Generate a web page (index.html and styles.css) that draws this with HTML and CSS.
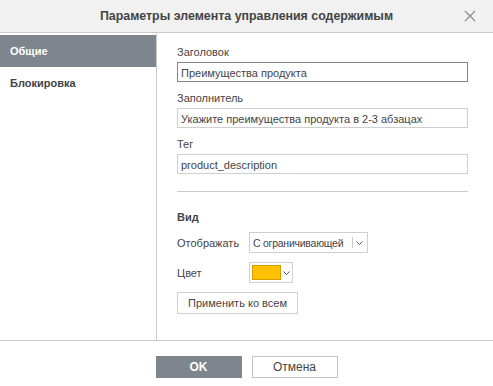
FILE: index.html
```html
<!DOCTYPE html>
<html>
<head>
<meta charset="utf-8">
<link rel="stylesheet" href="styles.css">
</head>
<body>
<div class="dialog">
  <div class="header">
    <span class="title">Параметры элемента управления содержимым</span>
    <span class="close"><svg width="12" height="12" viewBox="0 0 12 12"><path d="M1 1L11 11M11 1L1 11" stroke="#8a8a8a" stroke-width="1.1" fill="none"/></svg></span>
  </div>
  <div class="body">
    <div class="sidebar">
      <div class="tab active">Общие</div>
      <div class="tab">Блокировка</div>
    </div>
    <div class="content">
      <div class="label">Заголовок</div>
      <div class="input focused">Преимущества продукта</div>
      <div class="label">Заполнитель</div>
      <div class="input">Укажите преимущества продукта в 2-3 абзацах</div>
      <div class="label">Тег</div>
      <div class="input">product_description</div>
      <div class="sep"></div>
      <div class="section">Вид</div>
      <div class="row">
        <span class="rlabel">Отображать</span>
        <div class="select"><span class="sel-text">С ограничивающей</span><span class="sel-bar"></span><span class="caret"><svg width="7" height="4" viewBox="0 0 7 4"><path d="M0.5 0.5L3.5 3.5L6.5 0.5" stroke="#555" fill="none"/></svg></span></div>
      </div>
      <div class="row color-row">
        <span class="rlabel">Цвет</span>
        <div class="colorsel"><span class="swatch"></span><span class="caret"><svg width="7" height="4" viewBox="0 0 7 4"><path d="M0.5 0.5L3.5 3.5L6.5 0.5" stroke="#555" fill="none"/></svg></span></div>
      </div>
      <div class="btn apply">Применить ко всем</div>
    </div>
  </div>
  <div class="footer">
    <div class="btn ok">OK</div>
    <div class="btn cancel">Отмена</div>
  </div>
</div>
</body>
</html>
```
FILE: styles.css
```css
html, body { margin: 0; padding: 0; background: #fff; }
body { font-family: "Liberation Sans", Arial, sans-serif; font-size: 11px; color: #444; }
.dialog { width: 493px; height: 386px; display: flex; flex-direction: column; }
.header { height: 32px; border-bottom: 1px solid #cbcbcb; background: #f1f1f1; display: flex; align-items: center; justify-content: center; position: relative; }
.title { font-size: 12.4px; font-weight: bold; color: #444; }
.close { position: absolute; right: 17px; top: 10px; width: 12px; height: 12px; display: flex; }
.body { display: flex; height: 307px; border-bottom: 1px solid #cbcbcb; }
.sidebar { width: 157px; border-right: 1px solid #cbcbcb; padding-top: 2px; box-sizing: border-box; }
.tab { height: 32px; line-height: 32px; padding-left: 10px; font-weight: bold; color: #444; }
.tab.active { background: #7e858c; color: #fff; }
.content { flex: 1; padding: 5px 25px 0 20px; display: flex; flex-direction: column; }
.label { height: 24px; line-height: 14px; padding-top: 7px; box-sizing: border-box; margin-top: 1px; }
.input { height: 20px; line-height: 20px; border: 1px solid #cfcfcf; box-sizing: border-box; padding: 0 3px; color: #444; margin-bottom: 1px; }
.input.focused { border-color: #848484; }
.content .label:first-child { margin-top: 0; }
.sep { height: 1px; background: #cbcbcb; margin-top: 16px; }
.section { font-weight: bold; margin-top: 18px; height: 14px; line-height: 14px; }
.row { display: flex; align-items: center; margin-top: 8px; height: 21px; }
.color-row { margin-top: 9px; }
.rlabel { width: 72px; }
.select { width: 119px; height: 21px; border: 1px solid #cfcfcf; box-sizing: border-box; display: flex; align-items: center; position: relative; }
.sel-text { white-space: nowrap; padding-left: 3px; width: 102px; box-sizing: border-box; font-size: 10.5px; letter-spacing: -0.25px; }
.sel-bar { width: 1px; height: 11px; background: #ccc; }
.caret { width: 12px; display: flex; justify-content: center; align-items: center; }
.colorsel { width: 44px; height: 21px; border: 1px solid #cfcfcf; box-sizing: border-box; display: flex; align-items: center; padding-left: 2px; }
.swatch { width: 30px; height: 15px; background: #ffc000; border: 1px solid #d59e00; box-sizing: border-box; }
.btn { height: 22px; line-height: 20px; border: 1px solid #cfcfcf; box-sizing: border-box; text-align: center; background: #fff; color: #444; }
.apply { width: 121px; margin-top: 9px; }
.footer { flex: 1; display: flex; justify-content: center; align-items: flex-start; padding-top: 15px; gap: 10px; }
.ok { width: 86px; background: #7e858c; border-color: #7e858c; color: #fff; font-weight: bold; font-size: 12px; }
.cancel { width: 86px; font-size: 12px; border-color: #c4c4c4; }
```
